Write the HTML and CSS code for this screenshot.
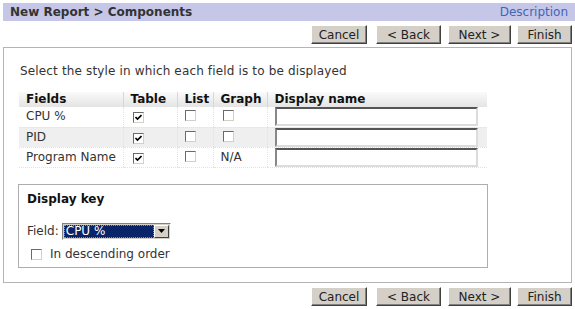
FILE: index.html
```html
<!DOCTYPE html>
<html>
<head>
    <title>New Report - Components</title>
    <link rel="stylesheet" href="styles.css">
</head>
<body>
    <div class="header">
        <span class="title">New Report &gt; Components</span>
        <a class="help" href="#">Description</a>
    </div>

    <div class="actions">
        <button class="b-cancel">Cancel</button>
        <button class="b-back">&lt; Back</button>
        <button class="b-next">Next &gt;</button>
        <button class="b-finish">Finish</button>
    </div>

    <div class="panel">
        <p class="intro">Select the style in which each field is to be displayed</p>

        <table class="fields">
            <thead>
                <tr>
                    <th class="c-field">Fields</th>
                    <th class="c-table">Table</th>
                    <th class="c-list">List</th>
                    <th class="c-graph">Graph</th>
                    <th class="c-name">Display name</th>
                </tr>
            </thead>
            <tbody>
                <tr>
                    <td>CPU %</td>
                    <td><span class="cb checked"><svg viewBox="0 0 7 7" width="7" height="7"><path d="M0.5 3 L2.5 5 L6.5 1" fill="none" stroke="#000" stroke-width="1.6"/></svg></span></td>
                    <td><span class="cb"></span></td>
                    <td><span class="cb"></span></td>
                    <td><input type="text" class="name"></td>
                </tr>
                <tr class="alt">
                    <td>PID</td>
                    <td><span class="cb checked"><svg viewBox="0 0 7 7" width="7" height="7"><path d="M0.5 3 L2.5 5 L6.5 1" fill="none" stroke="#000" stroke-width="1.6"/></svg></span></td>
                    <td><span class="cb"></span></td>
                    <td><span class="cb"></span></td>
                    <td><input type="text" class="name"></td>
                </tr>
                <tr>
                    <td>Program Name</td>
                    <td><span class="cb checked"><svg viewBox="0 0 7 7" width="7" height="7"><path d="M0.5 3 L2.5 5 L6.5 1" fill="none" stroke="#000" stroke-width="1.6"/></svg></span></td>
                    <td><span class="cb"></span></td>
                    <td class="na">N/A</td>
                    <td><input type="text" class="name"></td>
                </tr>
            </tbody>
        </table>

        <div class="key-box">
            <h2>Display key</h2>
            <div class="key-row">
                <span>Field:</span>
                <div class="select">
                    <span class="value">CPU %</span>
                    <span class="arrow"><svg viewBox="0 0 7 4" width="7" height="4"><path d="M0 0 H7 L3.5 4 Z" fill="#000"/></svg></span>
                </div>
            </div>
            <div class="order-row">
                <span class="cb"></span>
                <span>In descending order</span>
            </div>
        </div>
    </div>

    <div class="actions bottom">
        <button class="b-cancel">Cancel</button>
        <button class="b-back">&lt; Back</button>
        <button class="b-next">Next &gt;</button>
        <button class="b-finish">Finish</button>
    </div>
</body>
</html>
```

FILE: styles.css
```css
* {
    box-sizing: border-box;
    margin: 0;
    padding: 0;
}

body {
    font-family: 'DejaVu Sans', Verdana, sans-serif;
    font-size: 12px;
    line-height: 15px;
    color: #333;
    background: white;
    width: 575px;
}

.header {
    display: flex;
    justify-content: space-between;
    align-items: center;
    height: 18px;
    margin: 3px 0 0 3px;
    padding: 0 7px;
    background: #c6c6e8;
}

.title {
    font-weight: bold;
    color: #333;
}

.help {
    color: #3c68b4;
    text-decoration: none;
}

.actions {
    display: flex;
    justify-content: flex-end;
    gap: 7px;
    margin-top: 4px;
    padding-right: 3px;
}

.actions.bottom {
    margin-top: 4px;
}

.actions button {
    height: 19px;
    padding: 0;
    font-family: inherit;
    font-size: 12px;
    color: #222;
    background: #d4d0c8;
    border: 1px solid;
    border-color: #fff #404040 #404040 #fff;
    box-shadow: inset -1px -1px 0 #808080;
}

.b-cancel { width: 56px; }
.b-back { width: 65px; margin-left: 2px; }
.b-next { width: 63px; }
.b-finish { width: 55px; margin-left: -1px; }

.panel {
    height: 236px;
    margin: 3px 3px 0 3px;
    padding: 16px 0 0 15px;
    border: 1px solid #b4b4b4;
}

.intro {
    margin-left: 1px;
    letter-spacing: 0.15px;
}

.fields {
    width: 468px;
    margin-top: 13px;
    border-collapse: collapse;
}

.fields th {
    height: 15px;
    padding: 0 0 0 7px;
    text-align: left;
    color: #111;
    background: linear-gradient(#fafafa, #e4e4e4);
    border-left: 1px solid #d8d8d8;
}

.fields th.c-field {
    border-left: none;
}

.c-field { width: 104px; }
.c-table { width: 54px; }
.c-list { width: 36px; }
.c-graph { width: 54px; }

.fields td {
    height: 20px;
    padding: 0 0 0 7px;
    border-left: 1px dotted #e2e2e2;
    border-bottom: 1px dotted #e2e2e2;
}

.fields td:first-child {
    border-left: none;
}

.fields tr.alt td {
    background: #efefef;
}

.fields td:nth-child(2),
.fields td:nth-child(4) {
    padding-left: 9px;
}

.fields td.na {
    padding-left: 7px;
}

.cb {
    display: inline-flex;
    align-items: center;
    justify-content: center;
    width: 11px;
    height: 11px;
    vertical-align: -1px;
    background: white;
    border: 1px solid;
    border-color: #6a6a6a #d4d0c8 #d4d0c8 #6a6a6a;
}

.name {
    display: block;
    width: 203px;
    height: 19px;
    border: 2px solid;
    border-color: #555 #dcdcdc #dcdcdc #888;
    background: white;
}

.key-box {
    width: 470px;
    height: 84px;
    margin: 16px 0 0 -1px;
    padding: 7px 0 0 8px;
    border: 1px solid #adadad;
}

.key-box h2 {
    font-size: 12px;
    color: #111;
}

.key-row {
    display: flex;
    align-items: center;
    gap: 3px;
    margin-top: 16px;
}

.select {
    display: flex;
    width: 109px;
    height: 17px;
    border: 1px solid;
    border-color: #808080 #fff #fff #808080;
    background: #d4d0c8;
    padding: 1px;
}

.select .value {
    flex: 1;
    background: #0a246a;
    color: white;
    line-height: 13px;
    padding-left: 2px;
    outline: 1px dotted #8090c0;
    outline-offset: -1px;
}

.select .arrow {
    display: flex;
    align-items: center;
    justify-content: center;
    width: 15px;
    background: #d4d0c8;
    border: 1px solid;
    border-color: #fff #404040 #404040 #fff;
}

.order-row {
    display: flex;
    align-items: center;
    gap: 8px;
    margin: 7px 0 0 4px;
}
```
